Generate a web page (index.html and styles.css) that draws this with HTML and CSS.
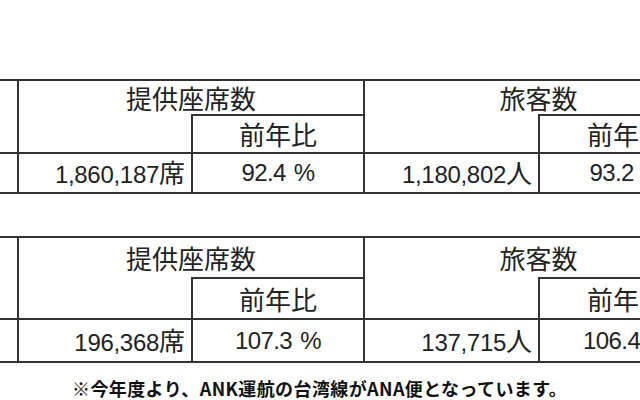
FILE: index.html
```html
<!DOCTYPE html>
<html lang="ja">
<head>
<meta charset="utf-8">
<link rel="stylesheet" href="styles.css">
</head>
<body>
<div class="page">
  <table class="t t1">
    <colgroup><col class="w0"><col class="w1"><col class="w2"><col class="w3"><col class="w4"></colgroup>
    <tr class="r1"><td rowspan="2" class="c0"></td><td colspan="2" class="grp">提供座席数</td><td colspan="2" class="grp">旅客数</td></tr>
    <tr class="r2"><td class="blank"></td><td class="sub">前年比</td><td class="blank"></td><td class="sub">前年比</td></tr>
    <tr class="r3"><td class="c0"></td><td class="num">1,860,187<span class="u">席</span></td><td class="pct">92.4 %</td><td class="num">1,180,802<span class="u">人</span></td><td class="pct">93.2 %</td></tr>
  </table>
  <table class="t t2">
    <colgroup><col class="w0"><col class="w1"><col class="w2"><col class="w3"><col class="w4"></colgroup>
    <tr class="r1"><td rowspan="2" class="c0"></td><td colspan="2" class="grp">提供座席数</td><td colspan="2" class="grp">旅客数</td></tr>
    <tr class="r2"><td class="blank"></td><td class="sub">前年比</td><td class="blank"></td><td class="sub">前年比</td></tr>
    <tr class="r3"><td class="c0"></td><td class="num">196,368<span class="u">席</span></td><td class="pct">107.3 %</td><td class="num">137,715<span class="u">人</span></td><td class="pct">106.4 %</td></tr>
  </table>
  <p class="note">※今年度より、ANK運航の台湾線がANA便となっています。</p>
</div>
</body>
</html>
```
FILE: styles.css
```css
html, body {
  margin: 0;
  padding: 0;
  background: #fff;
  overflow: hidden;
  width: 640px;
  height: 400px;
}
.page {
  width: 640px;
  height: 400px;
  overflow: hidden;
  font-family: "Noto Sans CJK JP", sans-serif;
  color: #222;
}
.t {
  border-collapse: collapse;
  table-layout: fixed;
  width: 732px;
  margin-left: -20px;
}
.t1 { margin-top: 79px; }
.t2 { margin-top: 42px; }
.w0 { width: 37px; }
.w1 { width: 174px; }
.w2 { width: 172px; }
.w3 { width: 175px; }
.w4 { width: 174px; }
.t td {
  border: 2px solid #333;
  padding: 0;
  font-size: 26px;
  line-height: 1;
  white-space: nowrap;
  overflow: hidden;
}
.t1 .r1 td { height: 33px; }
.t1 .r2 td { height: 36px; }
.t1 .r3 td { height: 38px; }
.t2 .r1 td { height: 39px; }
.t2 .r2 td { height: 39px; }
.t2 .r3 td { height: 41px; }
.t .grp {
  text-align: center;
  border-bottom: none;
}
.t .blank { border-top: none; }
.t .sub {
  text-align: center;
  border-top: 2px solid #333;
}
.t .num {
  text-align: right;
  padding-right: 6px;
  font-family: "Liberation Sans", sans-serif;
  font-size: 24px;
  letter-spacing: -0.3px;
}
.t .pct {
  text-align: center;
  font-family: "Liberation Sans", sans-serif;
  font-size: 24px;
  letter-spacing: -0.6px;
  word-spacing: 2px;
}
.u {
  font-family: "Noto Sans CJK JP", sans-serif;
  font-size: 26px;
  letter-spacing: 0;
}
.note {
  margin: 13px 0 0 72px;
  font-size: 18px;
  font-weight: bold;
  line-height: 24px;
  letter-spacing: 0.4px;
  color: #111;
  white-space: nowrap;
}
```
